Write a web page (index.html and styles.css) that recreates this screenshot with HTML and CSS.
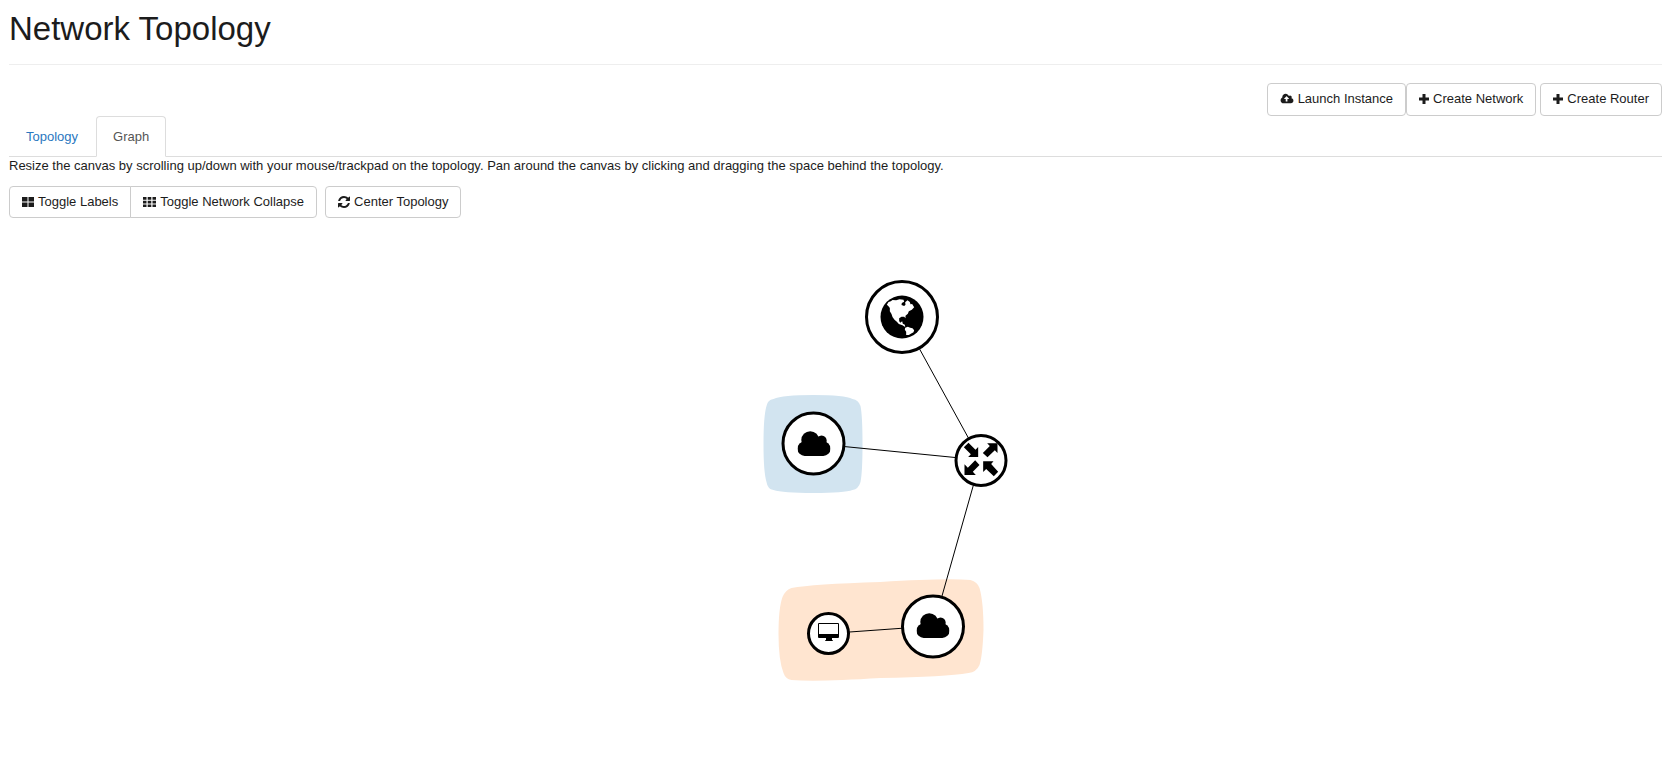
FILE: index.html
```html
<!DOCTYPE html>
<html lang="en">
<head>
<meta charset="utf-8">
<title>Network Topology</title>
<link rel="stylesheet" href="styles.css">
</head>
<body>
<svg class="defs" aria-hidden="true">
  <symbol id="plus" viewBox="1 0 10 12"><path d="M4.500 1h3v3.500H11v3H7.500V11h-3V7.500H1v-3h3.500z"/></symbol>
  <symbol id="cloud" viewBox="0 0 96 72">
    <circle cx="37" cy="26" r="26"/><circle cx="70" cy="28" r="15"/>
    <circle cx="21" cy="51" r="21"/><circle cx="75" cy="51" r="21"/>
    <path d="M21 30h54v42H21z"/>
  </symbol>
</svg>
<header class="page-header"><h1>Network Topology</h1></header>
<main>
  <div class="actions">
    <button class="btn" type="button"><svg class="icon wide" viewBox="0 0 1920 1792"><path d="M1216 864q0-14-9-23L855 489q-9-9-23-9t-23 9L458 840q-10 12-10 24 0 14 9 23t23 9h224v352q0 13 9.500 22.500T736 1280h192q13 0 22.500-9.500T960 1248V896h224q13 0 22.500-9.500T1216 864zm640 288q0 159-112.500 271.500T1472 1536H384q-185 0-316.500-131.500T-64 1088q0-130 70-240t188-165q-2-30-2-43 0-212 150-362t362-150q156 0 285.500 87T1179 446q71-62 166-62 106 0 181 75t75 181q0 76-41 138 130 31 213.500 135.500T1856 1152z" transform="translate(64)"/></svg>Launch Instance</button>
    <button class="btn" type="button"><svg class="icon narrow"><use href="#plus"/></svg>Create Network</button>
    <button class="btn spaced" type="button"><svg class="icon narrow"><use href="#plus"/></svg>Create Router</button>
  </div>
  <nav class="tabs">
    <a class="tab" href="#topology">Topology</a>
    <a class="tab active" href="#graph" aria-current="page">Graph</a>
  </nav>
  <p class="help">Resize the canvas by scrolling up/down with your mouse/trackpad on the topology. Pan around the canvas by clicking and dragging the space behind the topology.</p>
  <div class="toolbar">
    <div class="group">
      <button class="btn" type="button"><svg class="icon" viewBox="0 0 12 12"><path d="M0 1h5.500v4.500H0zM6.500 1H12v4.500H6.500zM0 6.500h5.500V11H0zM6.500 6.500H12V11H6.500z"/></svg>Toggle Labels</button>
      <button class="btn" type="button"><svg class="icon mid" viewBox="0 0 13 12"><path d="M0 1h3.500v2.700H0zM4.700 1h3.600v2.700H4.700zM9.500 1H13v2.700H9.500zM0 4.700h3.500v2.700H0zM4.700 4.700h3.600v2.700H4.700zM9.500 4.700H13v2.700H9.500zM0 8.400h3.500V11H0zM4.700 8.400h3.600V11H4.700zM9.500 8.400H13V11H9.500z"/></svg>Toggle Network Collapse</button>
    </div>
    <button class="btn" type="button"><svg class="icon" viewBox="128 128 1536 1536"><path d="M1639 1056q0 5-1 7-64 268-268 434.500T892 1664q-146 0-282.500-55T366 1452l-129 129q-19 19-45 19t-45-19-19-45v-448q0-26 19-45t45-19h448q26 0 45 19t19 45-19 45l-137 137q71 66 161 102t187 36q134 0 250-65t186-179q11-17 53-117 8-23 30-23h192q13 0 22.500 9.500t9.500 22.500zm25-800v448q0 26-19 45t-45 19h-448q-26 0-45-19t-19-45 19-45l138-138Q1097 384 896 384q-134 0-250 65T460 628q-11 17-53 117-8 23-30 23H178q-13 0-22.500-9.500T146 736v-7q65-268 270-434.500T896 128q146 0 284 55.500T1425 340l130-129q19-19 45-19t45 19 19 45z"/></svg>Center Topology</button>
  </div>
  <svg class="canvas" viewBox="575 230 520 520" role="img" aria-label="Network graph">
    <path fill="#d2e4f0" d="M773 399Q782 395 813 395Q844 395 852 399Q858 400 860 406Q862 416 862 444Q862 472 860 482Q858 489 852 490Q844 493 813 493Q782 493 773 490Q767 489 766 482Q763 472 763 444Q763 416 766 406Q767 400 773 399Z"/>
    <path fill="#ffe5d0" d="M791 588Q812 584 880 582Q945 578 970 580Q977 582 979 588Q983 602 983 630Q982 656 979 665Q976 672 968 673Q945 677 880 678Q817 682 791 680Q785 679 783 673Q778 660 778 634Q778 608 782 597Q785 590 791 588Z"/>
    <path class="link" d="M901.500 317L980 460L813 443.500M980 460L933 626L828 633.500"/>
    <g class="node"><circle cx="901.500" cy="317" r="35.500"/><circle cx="813" cy="443.500" r="30.500"/><circle cx="980.500" cy="460.500" r="25"/><circle cx="932.500" cy="626.500" r="30.500"/><circle cx="828" cy="633.500" r="20"/></g>
    <circle cx="901.500" cy="317" r="21.500"/>
    <g fill="#fff" transform="translate(877 292) scale(.3333)">
      <path d="M28 38L33 30L40 28L45 24L56 25L66 22L78 23L80 29L73 33L72 39L80 42L84 38L83 31L90 25L97 30L99 37L104 36L110 46L103 53L94 58L91 65L84 71L84 79L80 74L72 74L65 79L65 87L68 92L74 88L76 95L82 98L83 105L75 100L64 96L58 89L51 83L45 75L42 66L37 58L37 48L33 43Z"/>
      <path d="M83 107L91 104L98 107L105 109L110 115L108 121L100 125L94 129L86 129L86 119L82 113Z"/>
    </g>
    <use href="#cloud" x="797" y="431" width="33" height="25"/>
    <use href="#cloud" x="916" y="613" width="33" height="25"/>
    <g transform="translate(955 436) scale(.3333)">
      <path d="M25 34L39 20L60 41L68 33V63H38L46 55Z"/>
      <path d="M82 51L103 30L95 22H126V51L118 43L96 64Z"/>
      <path d="M59 73L72 87L52 107L61 117H27V85L37 95Z"/>
      <path d="M83 76H114L107 84L128 107L115 121L92 99L83 108Z"/>
    </g>
    <path fill-rule="evenodd" d="M818.500 623h19q1 0 1 1v13q0 1-1 1h-6v2q1 0 1 1h-8q0-1 1-1v-2h-7q-1 0-1-1v-13q0-1 1-1zm0 1v10h19v-10z"/>
  </svg>
</main>
</body>
</html>
```
FILE: styles.css
```css
body {
  margin: 0;
  padding: 9px 12px 0 9px;
  background: #fff;
  color: #1c1c1c;
  font: 13px/18px "Liberation Sans", Arial, sans-serif;
}
.defs { position: absolute; width: 0; height: 0; }
.page-header { padding-bottom: 15px; border-bottom: 1px solid #eee; }
h1 { margin: 0; font-size: 33px; font-weight: 400; line-height: 40px; }
.actions { display: flex; justify-content: flex-end; padding-top: 18px; }
.btn {
  display: inline-flex;
  align-items: center;
  gap: 4px;
  height: 32px;
  padding: 0 12px;
  border: 1px solid #ccc;
  border-radius: 4px;
  background: #fff;
  color: inherit;
  font: inherit;
  white-space: nowrap;
}
.actions .btn { height: 33px; padding-bottom: 2px; }
.spaced { margin-left: 4px; }
.icon { width: 12px; height: 12px; fill: currentColor; }
.narrow { width: 10px; }
.mid { width: 13px; }
.wide { width: 14px; }
.tabs { display: flex; gap: 1px; border-bottom: 1px solid #ddd; }
.tab {
  margin-bottom: -1px;
  padding: 10px 16px;
  border: 1px solid transparent;
  border-radius: 4px 4px 0 0;
  color: #2a77c0;
  line-height: 19px;
  text-decoration: none;
}
.tab.active { border-color: #ddd #ddd #fff; background: #fff; color: #555; }
.help { margin: 0 0 11px; }
.toolbar { display: flex; gap: 8px; }
.group { display: flex; }
.group .btn:first-child { border-radius: 4px 0 0 4px; }
.group .btn:last-child { margin-left: -1px; border-radius: 0 4px 4px 0; }
.canvas { display: block; width: 100%; height: 520px; margin-top: 12px; }
.link { fill: none; stroke: #000; stroke-width: 1; }
.node { fill: #fff; stroke: #000; stroke-width: 3; }
```
